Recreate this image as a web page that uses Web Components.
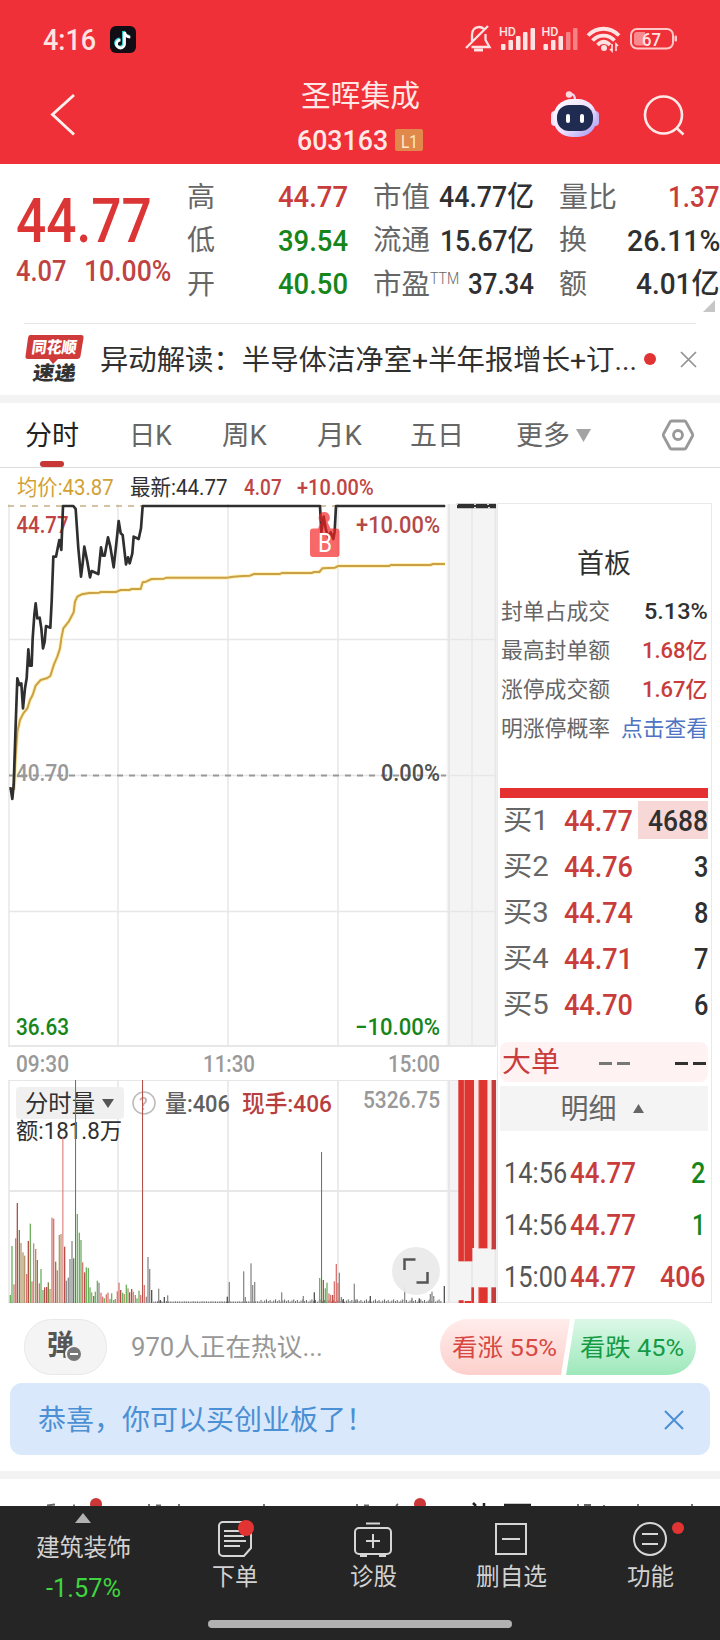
<!DOCTYPE html>
<html lang="zh-CN">
<head>
<meta charset="utf-8">
<title>圣晖集成 603163</title>
<style>
  body {
    margin: 0;
    width: 720px;
    height: 1640px;
    overflow: hidden;
    background: #fff;
    color: #303030;
    font-family: Roboto, "Noto Sans CJK SC", sans-serif;
    --red: #c93c3c;
    --green: #16851a;
    --gray: #666;
    --band: #f3f3f3;
  }
</style>
</head>
<body>
<status-bar></status-bar>
<title-bar name="圣晖集成" code="603163"></title-bar>
<stock-quote></stock-quote>
<news-line>异动解读：半导体洁净室+半年报增长+订...</news-line>
<period-tabs></period-tabs>
<chart-area>
  <minute-chart slot="chart"></minute-chart>
  <volume-chart slot="chart"></volume-chart>
  <order-book slot="side"></order-book>
</chart-area>
<talk-bar></talk-bar>
<tip-banner>恭喜，你可以买创业板了！</tip-banner>
<more-tabs></more-tabs>
<bottom-nav></bottom-nav>

<script>
// Base class: puts styles and markup in an open shadow root
class BaseElement extends HTMLElement {
  constructor() {
    super();
    this.attachShadow({ mode: 'open' });
  }

  connectedCallback() {
    this.shadowRoot.innerHTML = `<style>${this.getStyles()}</style>${this.getMarkup()}`;
  }

  getStyles() { return ''; }
  getMarkup() { return '<slot></slot>'; }
}

// Text squeezed or stretched to a given width
class FitText extends BaseElement {
  connectedCallback() {
    super.connectedCallback();
    const w = Number(this.getAttribute('w'));
    const span = this.shadowRoot.querySelector('span');
    const real = span.offsetWidth;
    if (w && real) {
      this.style.width = w + 'px';
      span.style.transform = `translateY(1px) scaleX(${w / real})`;
    }
  }

  getStyles() {
    return `
      :host { display: block; flex: none; white-space: nowrap; line-height: 1; }
      span { display: inline-block; transform-origin: 0 50%; vertical-align: top; }
    `;
  }

  getMarkup() { return '<span><slot></slot></span>'; }
}
customElements.define('fit-text', FitText);

class StatusBar extends BaseElement {
  getStyles() {
    return `
      :host { display: flex; justify-content: space-between; height: 76px; padding: 0 40px 0 43px;
        background: #f03038; color: #ffe3e3; box-sizing: border-box; }
      .left { display: flex; align-items: center; gap: 14px; height: 78px; }
      fit-text { font-size: 29px; font-weight: 500; }
      svg { display: block; }
      .right { margin-top: 20px; }
      text { font-weight: 500; fill: #ffe3e3; }
    `;
  }

  getMarkup() {
    return `
      <div class="left">
        <fit-text w="53">4:16</fit-text>
        <svg width="26" height="27" viewBox="0 0 26 27">
          <rect width="26" height="27" rx="6" fill="#120c14"/>
          <g fill="none" stroke-width="2.8">
            <path d="M13.5 5v12a4 4 0 1 1-4-4M13.5 5c.6 3 2.500 5 5.800 5.200" stroke="#35d8d8"/>
            <path d="M14.500 6v12a4 4 0 1 1-4-4M14.500 6c.6 3 2.500 5 5.800 5.200" stroke="#fff"/>
          </g>
        </svg>
      </div>
      <svg class="right" width="216" height="36" viewBox="464 20 216 36">
        <g fill="none" stroke="#ffe3e3" stroke-width="2.300">
          <path d="M466 48L488 26M472 41v-6c0-5 3-8 7-8 2 0 4 1 5 2M485.500 34v6l4 7h-18" />
          <path d="M474 50h9" stroke-width="3"/>
        </g>
        <text x="499" y="36" font-size="12.500" textLength="17">HD</text>
        <text x="541.500" y="36" font-size="12.500" textLength="17">HD</text>
        <g fill="#ffe3e3">
          <rect x="501" y="44" width="4.500" height="6" rx="1"/><rect x="508.500" y="40" width="4.500" height="10" rx="1"/>
          <rect x="516" y="36" width="4.500" height="14" rx="1"/><rect x="523" y="32" width="4.500" height="18" rx="1"/>
          <rect x="530.500" y="28" width="4.500" height="22" rx="1"/>
          <rect x="543.500" y="44" width="4.500" height="6" rx="1"/><rect x="551" y="40" width="4.500" height="10" rx="1"/>
          <rect x="558.500" y="36" width="4.500" height="14" rx="1"/>
          <g opacity=".45"><rect x="566" y="32" width="4.500" height="18" rx="1"/><rect x="573" y="28" width="4.500" height="22" rx="1"/></g>
        </g>
        <g fill="none" stroke="#ffe3e3" stroke-width="3.800">
          <path d="M588 35.500c9-9 22-9 31 0M592.500 40.500c6.500-6.500 15.500-6.500 22 0M597.500 45c4-4 8.500-4 12.500 0"/>
        </g>
        <circle cx="604" cy="48" r="3" fill="#ffe3e3"/>
        <path d="M612 44v7l-2-2M616 51v-7l2 2" fill="none" stroke="#ffe3e3" stroke-width="1.600"/>
        <rect x="631" y="29" width="42" height="19.500" rx="6" fill="none" stroke="#ffc9c9" stroke-width="2"/>
        <path d="M637 32h8v13.500h-8a3 3 0 0 1-3-3v-7.500a3 3 0 0 1 3-3z" fill="#f98a8d"/>
        <rect x="674.500" y="35.500" width="2.500" height="6" rx="1" fill="#ffc9c9"/>
        <text x="642" y="45.500" font-size="18.500" textLength="19" lengthAdjust="spacingAndGlyphs">67</text>
      </svg>
    `;
  }
}
customElements.define('status-bar', StatusBar);

class TitleBar extends BaseElement {
  getStyles() {
    return `
      :host { display: grid; grid-template-columns: 290px 140px 290px; height: 88px; background: #f03038; color: #ffe9e7; }
      svg { display: block; }
      .back { margin: 16px 0 0 48px; }
      .mid { display: flex; flex-direction: column; align-items: center; padding-top: 5px; }
      .name { font-size: 29.5px; }
      .code { display: flex; align-items: center; gap: 7px; margin: 16px 0 0; font-size: 27px; font-weight: 500; }
      .tag { display: grid; place-items: center; width: 28px; height: 22px; background: #e1894a;
        border-radius: 2px; font-size: 19px; font-weight: 400; color: #fdebc8; }
      .tools { display: flex; gap: 42px; margin: 13px 0 0 121px; }
    `;
  }

  getMarkup() {
    return `
      <svg class="back" width="30" height="46" viewBox="0 0 30 46"><path d="M26 3L4.500 22.500L26 42.500" fill="none" stroke="#fff0ee" stroke-width="2.900"/></svg>
      <div class="mid">
        <fit-text class="name" w="119">${this.getAttribute('name')}</fit-text>
        <div class="code">
          <fit-text w="91">${this.getAttribute('code')}</fit-text>
          <span class="tag"><fit-text w="17">L1</fit-text></span>
        </div>
      </div>
      <div class="tools">
        <svg width="50" height="50" viewBox="0 0 50 50">
          <defs><linearGradient id="head" x2="1" y2="1"><stop stop-color="#fff"/><stop offset=".55" stop-color="#eedfff"/><stop offset="1" stop-color="#9d92f0"/></linearGradient></defs>
          <path d="M18 5c5-1 6 3 6 6" fill="none" stroke="#e9d4ee" stroke-width="2.200"/>
          <circle cx="18" cy="5.500" r="3.200" fill="#ffd9e0"/>
          <rect x="0" y="22" width="8" height="15" rx="4" fill="#f4dff4"/>
          <rect x="40" y="22" width="8" height="15" rx="4" fill="#c5b2f3"/>
          <rect x="2" y="10" width="44" height="38" rx="19" fill="url(#head)"/>
          <rect x="6" y="16" width="36" height="26" rx="12" fill="#1f2b50"/>
          <rect x="15" y="25" width="4" height="9" rx="2" fill="#fff"/><rect x="29" y="25" width="4" height="9" rx="2" fill="#fff"/>
        </svg>
        <svg width="44" height="50" viewBox="0 0 44 50"><g fill="none" stroke="#ffe9e7" stroke-width="2.600"><circle cx="20.500" cy="26" r="18.500"/><path d="M33.500 39l7 6.500"/></g></svg>
      </div>
    `;
  }
}
customElements.define('title-bar', TitleBar);

class StockQuote extends BaseElement {
  getStyles() {
    return `
      :host { display: grid; grid-template-columns: 187px 161px 25px 161px 25px 1fr; height: 159px;
        box-sizing: border-box; padding-top: 11px; position: relative; }
      .price { padding-left: 16px; color: #dc3535; }
      .price .now { font-size: 61px; font-weight: 500; margin-top: 15px; }
      .price div { display: flex; gap: 17px; margin-top: 5px; font-size: 29px; font-weight: 500; color: #bf4343; }
      .col { display: flex; flex-direction: column; }
      .c2 { grid-column: 4; }
      .c3 { grid-column: 6; }
      .row { display: flex; justify-content: space-between; align-items: center; height: 43.5px; font-size: 29px; font-weight: 500; }
      .label { display: flex; color: var(--gray); font-size: 28px; font-weight: 400; }
      .label .sup { font-size: 16px; font-weight: 300; }
      .up { color: var(--red); }
      .down { color: var(--green); }
      svg { position: absolute; left: 703px; top: 136px; }
      hr { position: absolute; left: 24px; right: 24px; bottom: -1px; margin: 0; border: 0; border-top: 1px solid #e6e6e6; }
    `;
  }

  row(label, w, value, vw, cls = '', sup = '') {
    return `<div class="row"><div class="label"><fit-text w="${w}">${label}</fit-text>${sup}</div><fit-text class="${cls}" w="${vw}">${value}</fit-text></div>`;
  }

  getMarkup() {
    return `
      <div class="price">
        <fit-text class="now" w="136">44.77</fit-text>
        <div><fit-text w="51">4.07</fit-text><fit-text w="87">10.00%</fit-text></div>
      </div>
      <div class="col">
        ${this.row('高', 28, '44.77', 70, 'up')}
        ${this.row('低', 28, '39.54', 70, 'down')}
        ${this.row('开', 28, '40.50', 70, 'down')}
      </div>
      <div class="col c2">
        ${this.row('市值', 57, '44.77亿', 95)}
        ${this.row('流通', 57, '15.67亿', 94)}
        ${this.row('市盈', 57, '37.34', 66, '', '<fit-text class="sup" w="29">TTM</fit-text>')}
      </div>
      <div class="col c3">
        ${this.row('量比', 58, '1.37', 52, 'up')}
        ${this.row('换', 28, '26.11%', 93)}
        ${this.row('额', 28, '4.01亿', 84)}
      </div>
      <svg width="12" height="12"><path d="M12 0v12H0z" fill="#c6c6c6"/></svg>
      <hr>
    `;
  }
}
customElements.define('stock-quote', StockQuote);

class NewsLine extends BaseElement {
  getStyles() {
    return `
      :host { display: flex; align-items: center; height: 72px; border-bottom: 8px solid var(--band); }
      svg { flex: none; display: block; }
      .logo { margin: 0 17px 0 24px; overflow: visible; }
      .logo text { font-weight: 900; font-family: "Noto Sans CJK SC", sans-serif; }
      fit-text { font-size: 28px; padding-top: 1px; }
      .dot { width: 12px; height: 12px; border-radius: 50%; background: #e03434; margin: 0 24px 0 7px; }
    `;
  }

  getMarkup() {
    return `
      <svg class="logo" width="59" height="50" viewBox="0 0 59 50">
        <path d="M6 1h51q3 0 2.500 3l-3 18q-.5 3-3.500 3H34l-5 5-4-5H4q-3 0-2.500-3L4 4q.5-3 2-3z" fill="#cf3a3a"/>
        <text transform="translate(7 19) skewX(-8)" font-size="16" fill="#fff" textLength="45" lengthAdjust="spacingAndGlyphs">同花顺</text>
        <text transform="translate(8 45.500) skewX(-8)" font-size="19.500" fill="#333" textLength="43" lengthAdjust="spacingAndGlyphs">速递</text>
      </svg>
      <fit-text w="537"><slot></slot></fit-text>
      <span class="dot"></span>
      <svg width="17" height="17"><path d="M1 1l15 15M16 1L1 16" stroke="#929292" stroke-width="1.700"/></svg>
    `;
  }
}
customElements.define('news-line', NewsLine);

class PeriodTabs extends BaseElement {
  getStyles() {
    return `
      :host { display: block; }
      nav { display: flex; height: 65px; box-sizing: border-box; padding-left: 25px; border-bottom: 1px solid #ddd; }
      nav > div { display: flex; align-items: center; color: var(--gray); font-size: 27.500px; position: relative; }
      nav .on { color: #222; }
      .on::after { content: ""; position: absolute; left: 15px; bottom: 0; width: 24px; height: 6px; border-radius: 3px; background: #c83636; }
      .more { gap: 6px; }
      svg { align-self: center; }
      .set { margin-left: 70px; }
      .info { display: flex; align-items: center; height: 35px; padding: 2px 0 0 17px; box-sizing: border-box; font-size: 22px; font-weight: 500; }
      .cjk { font-weight: 400; }
    `;
  }

  getMarkup() {
    const tabs = [['分时', 54, 0], ['日K', 43, 50], ['周K', 45, 50], ['月K', 45, 50], ['五日', 54, 48]];
    return `
      <nav>
        ${tabs.map(([t, w, m], i) => `<div class="${i ? '' : 'on'}" style="margin-left:${m}px"><fit-text w="${w}">${t}</fit-text></div>`).join('')}
        <div class="more" style="margin-left:52px"><fit-text w="54">更多</fit-text><svg width="15" height="13"><path d="M0 0h15L7.500 13z" fill="#a3a3a3"/></svg></div>
        <svg class="set" width="34" height="34" viewBox="0 0 34 34"><g fill="none" stroke="#999" stroke-width="2.800"><path d="M10.500 3h13q1 0 1.500 1l6.500 12q.5 1 0 2L25 30q-.5 1-1.500 1h-13q-1 0-1.500-1L2.500 18q-.5-1 0-2L9 4q.5-1 1.500-1z"/><circle cx="17" cy="17" r="4.500"/></g></svg>
      </nav>
      <div class="info">
        <fit-text w="97" class="cjk" style="color:#d2a136">均价:43.87</fit-text>
        <fit-text w="98" style="margin-left:16px" class="cjk">最新:44.77</fit-text>
        <fit-text w="38" style="margin-left:16px;color:#c04444">4.07</fit-text>
        <fit-text w="77" style="margin-left:15px;color:#c04444">+10.00%</fit-text>
      </div>
    `;
  }
}
customElements.define('period-tabs', PeriodTabs);

class ChartArea extends BaseElement {
  getStyles() {
    return `
      :host { display: grid; grid-template-columns: 489px 215px; padding-left: 8px; height: 800px; }
      .left { display: flex; flex-direction: column; }
    `;
  }

  getMarkup() {
    return '<div class="left"><slot name="chart"></slot></div><slot name="side"></slot>';
  }
}
customElements.define('chart-area', ChartArea);

// Price line of the day, one unit in the line group = 1/3 px
const PRICE = '28,880 32,880 37,912 41,870 44,780 47,690 52,550 58,570 64,565 69,640 75,580 80,550 85,463 89,512 95,512 98,430 103,360 107,325 112,370 119,368 124,400 129,460 134,440 138,393 151,398 155,320 160,185 168,185 173,160 178,135 184,165 189,33 220,33 227,42 235,160 243,245 248,205 253,155 262,200 270,247 275,228 295,237 303,157 308,182 314,182 324,127 331,155 341,217 349,145 356,78 362,115 368,120 378,208 384,187 389,205 397,175 401,125 416,132 423,100 428,33 960,33 964,112 971,65 978,105 984,125 992,112 1000,132 1004,110 1008,33 1335,33';
const AVERAGE = '42,885 46,800 52,710 60,675 70,655 82,640 90,615 98,600 107,572 122,555 140,550 151,543 162,508 172,485 180,460 184,430 190,400 206,380 221,352 225,320 232,305 245,298 268,294 298,293 302,291 348,291 362,285 388,285 395,282 422,282 428,262 438,260 455,252 492,251 500,248 680,248 700,245 730,243 750,242 762,237 840,237 845,234 935,234 942,231 958,231 967,220 1005,218 1015,213 1168,213 1172,210 1292,210 1298,207 1335,207';

class MinuteChart extends BaseElement {
  getStyles() {
    return `
      :host { display: block; height: 577px; }
      svg { display: block; }
      text { font-size: 24px; font-weight: 500; }
    `;
  }

  label(x, y, w, text, fill) {
    return `<text x="${x}" y="${y}" fill="${fill}" textLength="${w}" lengthAdjust="spacingAndGlyphs">${text}</text>`;
  }

  getMarkup() {
    return `
      <svg width="489" height="577" viewBox="8 503 489 577">
        <rect x="446.500" y="504" width="50" height="542" fill="#f4f4f4"/>
        <g stroke="#e7e7e7" stroke-width="1.500" fill="none">
          <path d="M9 504v542M118 504v542M228 504v542M338 504v542M472 504v542"/>
          <path d="M9 639.500h487M9 775.500h487M9 911.500h487"/>
          <path d="M8 1046h488" stroke-width="2"/>
          <path d="M449 504v542M495.500 504v542" stroke-width="2"/>
        </g>
        <path d="M8 506h438" stroke="#c8ae86" stroke-width="1.600" stroke-dasharray="6 6"/>
        <path d="M9 775.500h437" stroke="#999" stroke-width="1.800" stroke-dasharray="6 6"/>
        ${this.label(16.500, 533, 52, '44.77', '#c04343')}
        ${this.label(356, 533, 84, '+10.00%', '#b54848')}
        ${this.label(16, 781, 53, '40.70', '#999')}
        ${this.label(381, 781, 59, '0.00%', '#505050')}
        ${this.label(16, 1035, 53, '36.63', '#16851a')}
        ${this.label(355, 1035, 85, '−10.00%', '#16851a')}
        ${this.label(16, 1072, 53, '09:30', '#999')}
        ${this.label(203, 1072, 52, '11:30', '#999')}
        ${this.label(388, 1072, 52, '15:00', '#999')}
        <g transform="translate(0 495) scale(.33333)" fill="none" stroke-linejoin="round">
          <polyline points="${AVERAGE}" stroke="#fff2b8" stroke-width="12"/>
          <polyline points="${AVERAGE}" stroke="#caa049" stroke-width="6"/>
          <polyline points="${PRICE}" stroke="#2f2f2f" stroke-width="8"/>
        </g>
        <path d="M457 506h39" stroke="#303030" stroke-width="4.500" stroke-linecap="butt"/>
        <path d="M457 503.500v1.500M475 503.500v1.500M475 507v1.500M488 503.500v1.500M489 507v1.500" stroke="#ddd" stroke-width="2"/>
        <g fill="#f52020" fill-opacity=".68">
          <path d="M324.500 512a5.500 5.500 0 0 1 3 10l3 6.500h6.500a3 3 0 0 1 2.500 3v22.500a3 3 0 0 1-3 3h-23.500a3 3 0 0 1-3-3v-22.500a3 3 0 0 1 3-3h5l3-6.500a5.500 5.500 0 0 1 3-10z"/>
        </g>
        <text x="318" y="552" fill="#fff" style="font-weight:400;font-size:25px" textLength="14" lengthAdjust="spacingAndGlyphs">B</text>
      </svg>
    `;
  }
}
customElements.define('minute-chart', MinuteChart);

// Volume bars: x, top, colour key
const BARS = [
  [31,765,'g'],[36,618,'g'],[42,733,'r'],[47,595,'r'],[52,489,'R'],[58,570,'o'],[63,609,'t'],[69,637,'t'],[74,647,'t'],[80,702,'r'],
  [85,603,'R'],[91,551,'g'],[96,724,'r'],[101,610,'t'],[107,627,'r'],[112,660,'o'],[118,730,'r'],[123,687,'g'],[129,750,'g'],[134,742,'R'],
  [140,741,'R'],[145,727,'o'],[150,747,'t'],[156,533,'r'],[161,536,'r'],[167,665,'o'],[172,691,'r'],[178,585,'t'],[183,582,'t'],[189,290,'r'],
  [194,620,'R'],[199,722,'k'],[205,713,'k'],[210,657,'k'],[216,603,'k'],[221,655,'G'],[227,117,'G'],[232,522,'g'],[238,578,'g'],[243,600,'g'],
  [248,667,'r'],[254,697,'R'],[259,682,'g'],[265,684,'g'],[270,742,'g'],[275,757,'t'],[281,768,'G'],[286,755,'g'],[292,722,'g'],[297,728,'k'],
  [303,758,'r'],[308,770,'r'],[313,775,'g'],[319,763,'r'],[324,758,'r'],[330,777,'g'],[335,760,'g'],[341,780,'r'],[346,777,'g'],[352,754,'r'],
  [357,728,'r'],[362,750,'R'],[368,758,'g'],[373,762,'t'],[379,734,'g'],[384,745,'t'],[389,757,'R'],[395,747,'R'],[400,755,'t'],[406,765,'r'],
  [411,775,'g'],[417,752,'g'],[422,765,'r'],[428,117,'R'],[433,735,'r'],[439,770,'k'],[444,651,'k'],[449,687,'k'],[455,750,'d'],
  [476,746,'k'],[481,780,'d'],[493,771,'d'],[503,766,'k'],[682,770,'d'],[688,726,'k'],[731,694,'k'],[736,771,'k'],[753,670,'k'],[758,735,'k'],
  [764,726,'k'],[845,757,'k'],[910,768,'k'],[943,757,'d'],[959,714,'g'],[965,336,'G'],[970,720,'R'],[976,745,'g'],[981,728,'g'],[987,760,'r'],
  [992,765,'r'],[998,765,'R'],[1003,724,'r'],[1009,672,'r'],[1014,729,'r'],[1018,698,'k'],[1024,771,'k'],[1030,777,'d'],[1063,731,'k'],[1068,778,'k'],
  [1111,768,'d'],[1214,740,'k'],[1236,773,'k'],[1258,775,'d'],[1291,762,'k'],[1296,755,'k'],[1301,768,'k'],[1333,738,'d']
];
const BAR_COLORS = { r: '#d97872', R: '#b54f49', g: '#6db161', G: '#4a8f45', o: '#7f8446', t: '#b59a6e', k: '#8d8d8d', d: '#555' };

class VolumeChart extends BaseElement {
  getStyles() {
    return `
      :host { display: block; height: 223px; }
      svg { display: block; }
      text { font-size: 24px; }
    `;
  }

  bars() {
    let out = '';
    // low ticks along the base line
    for (let i = 0, x = 460; x < 1325; x += 5.450, i++) {
      const top = 785 - (i * 7 % 5) * (x > 780 ? 1.700 : .300);
      out += `<rect x="${x.toFixed(1)}" y="${top.toFixed(1)}" width="3" height="${(789 - top).toFixed(1)}" fill="#666"/>`;
    }
    for (const [x, top, c] of BARS) {
      out += `<rect x="${x - 2}" y="${top}" width="${top < 350 ? 3.200 : 4}" height="${789 - top}" fill="${BAR_COLORS[c]}"/>`;
    }
    return out;
  }

  getMarkup() {
    return `
      <svg width="489" height="223" viewBox="8 1080 489 223">
        <rect x="446.500" y="1080" width="50" height="223" fill="#f4f4f4"/>
        <g stroke="#e7e7e7" stroke-width="1.600" fill="none">
          <path d="M9 1080v223M118 1080v223M228 1080v223M338 1080v223M472 1080v223"/>
          <path d="M9 1191h487M8 1080h488" stroke-width="2"/>
          <path d="M449 1080v223M495.500 1080v223" stroke-width="2"/>
          <path d="M9 1302.500h487"/>
        </g>
        <rect x="16" y="1087" width="108" height="32" rx="4" fill="#f0f0f0"/>
        <text x="25" y="1111.500" fill="#303030" textLength="70" lengthAdjust="spacingAndGlyphs">分时量</text>
        <path d="M102 1099h12l-6 9z" fill="#555"/>
        <g fill="none" stroke="#bdbdbd" stroke-width="1.600"><circle cx="144" cy="1103" r="11"/></g>
        <text x="139" y="1109.500" style="font-size:18px" fill="#c2a8a8">?</text>
        <text x="165" y="1112" fill="#606060" font-weight="500" textLength="65" lengthAdjust="spacingAndGlyphs">量:406</text>
        <text x="242" y="1112" fill="#b83e3e" font-weight="500" textLength="90" lengthAdjust="spacingAndGlyphs">现手:406</text>
        <text x="363" y="1108" fill="#999" font-weight="500" textLength="77" lengthAdjust="spacingAndGlyphs">5326.75</text>
        <text x="16" y="1138.500" fill="#303030" style="font-size:23px" textLength="106" lengthAdjust="spacingAndGlyphs">额:181.8万</text>
        <g transform="translate(0 1040) scale(.33333)">
          ${this.bars()}
          <g fill="#df3531">
            <rect x="1375" y="117" width="42" height="547"/><rect x="1415" y="117" width="7" height="507"/>
            <rect x="1435" y="117" width="28" height="508"/><rect x="1474" y="117" width="14" height="511" fill="#c63d3d"/>
            <rect x="1414" y="742" width="8" height="47"/><rect x="1435" y="742" width="28" height="47"/><rect x="1474" y="742" width="14" height="47" fill="#c63d3d"/>
            <path d="M1376 781h15v8h-15zM1394 783h20v6h-20z"/>
          </g>
          <path d="M1422 117h13v507h-13zM1463 117h11v508h-11z" fill="#fbe6e4"/>
          <path d="M1393 117v547M1436 117v508M1436 742v46" stroke="#f19b98" stroke-width="2.500"/>
        </g>
        <circle cx="416" cy="1271" r="24" fill="#e9e9e9" fill-opacity=".93"/>
        <path d="M404.500 1270v-10.500h11M427.500 1272v10.500h-11" fill="none" stroke="#555" stroke-width="2.500"/>
      </svg>
    `;
  }
}
customElements.define('volume-chart', VolumeChart);

class OrderBook extends BaseElement {
  getStyles() {
    return `
      :host { display: block; box-sizing: border-box; height: 800px; padding: 0 3px 0 2px; border: 1px solid #e9e9e9; font-weight: 500; }
      .title { display: flex; justify-content: center; padding: 46px 0 15px; font-size: 27px; font-weight: 400; }
      .stat, .bid, .deal { display: grid; align-items: center; }
      .stat { grid-template-columns: 1fr auto; height: 38.800px; font-size: 22px; padding: 0 0 0 1px; }
      .stat :first-child { color: var(--gray); font-weight: 400; }
      .up { color: var(--red); }
      .down { color: var(--green); }
      .link { color: #4f74c4; font-weight: 400; }
      .bar { height: 10px; background: #e43030; margin: 41px 0 -1px; }
      .bid { grid-template-columns: 61px 74px 1fr; height: 46px; font-size: 29px; padding-left: 3px; }
      .bid .n { color: var(--gray); font-weight: 400; font-size: 28px; }
      .bid div, .big div, .deal div { display: flex; justify-content: flex-end; align-items: center; height: 38px; padding-right: 0; }
      .bid .hot { background: #f8d7d7; }
      .big { display: grid; grid-template-columns: 62px 68px 1fr; align-items: center; height: 40px; margin-top: 15px; padding-left: 2px;
        background: #fff2f2; border-radius: 8px; font-size: 28px; }
      .big div { padding: 2px 2px 0 0; }
      .dash { width: 31px; height: 3px; background: linear-gradient(90deg, currentColor 13px, transparent 13px, transparent 18px, currentColor 18px); }
      .detail { display: flex; justify-content: center; align-items: center; gap: 16px; height: 45px; margin: 4px 0 15px;
        padding-right: 4px; box-sizing: border-box; background: #f4f4f4; color: var(--gray); font-weight: 400; font-size: 28px; }
      .deal { grid-template-columns: 66px 66px 1fr; height: 52px; font-size: 29px; padding-left: 4px; }
      .deal .t { color: #555; font-weight: 400; }
      .deal div { padding-right: 3px; }
    `;
  }

  getMarkup() {
    const stats = [['封单占成交', '5.13%', 64, ''], ['最高封单额', '1.68亿', 66, 'up'], ['涨停成交额', '1.67亿', 66, 'up'], ['明涨停概率', '点击查看', 87, 'link']];
    const bids = [['1', '44.77', '4688', 60], ['2', '44.76', '3', 14], ['3', '44.74', '8', 14], ['4', '44.71', '7', 14], ['5', '44.70', '6', 14]];
    const deals = [['14:56', '2', 14, 'down'], ['14:56', '1', 13, 'down'], ['15:00', '406', 45, 'up']];
    return `
      <div class="title"><fit-text w="54">首板</fit-text></div>
      ${stats.map(([k, v, w, c]) => `<div class="stat"><fit-text w="109">${k}</fit-text><fit-text w="${w}" class="${c}">${v}</fit-text></div>`).join('')}
      <div class="bar"></div>
      ${bids.map(([n, p, q, w], i) => `<div class="bid"><fit-text class="n" w="46">买${n}</fit-text><fit-text class="up" w="69">${p}</fit-text><div class="${i ? '' : 'hot'}"><fit-text w="${w}">${q}</fit-text></div></div>`).join('')}
      <div class="big"><fit-text class="up" style="font-weight:400" w="58">大单</fit-text><div><span class="dash" style="color:#777"></span></div><div><span class="dash"></span></div></div>
      <div class="detail"><fit-text w="56">明细</fit-text><svg width="11" height="9"><path d="M5.500 0L11 9H0z" fill="#666"/></svg></div>
      ${deals.map(([t, q, w, c]) => `<div class="deal"><fit-text class="t" w="63">${t}</fit-text><fit-text class="up" w="66">44.77</fit-text><div><fit-text class="${c}" w="${w}">${q}</fit-text></div></div>`).join('')}
    `;
  }
}
customElements.define('order-book', OrderBook);

class TalkBar extends BaseElement {
  getStyles() {
    return `
      :host { display: flex; align-items: center; height: 80px; padding: 8px 24px 0; box-sizing: border-box; }
      .pill { width: 83px; height: 56px; flex: none; }
      .say { margin: 0 117px 0 24px; font-size: 25.500px; color: #979797; }
      svg { display: block; flex: none; }
      text { font-size: 23.500px; }
    `;
  }

  getMarkup() {
    return `
      <svg class="pill" viewBox="24 1319 83 56">
        <rect x="24.500" y="1319.500" width="82" height="55" rx="27" fill="#f4f4f4" stroke="#e8e8e8"/>
        <text x="47" y="1355" style="font-size:28px;font-weight:700" fill="#555" textLength="27" lengthAdjust="spacingAndGlyphs">弹</text>
        <circle cx="74" cy="1354" r="8" fill="#777" stroke="#f4f4f4" stroke-width="2"/>
        <path d="M70 1354h8" stroke="#fff" stroke-width="2"/>
      </svg>
      <fit-text class="say" w="192">970人正在热议...</fit-text>
      <svg width="256" height="56" viewBox="0 0 256 56">
        <defs>
          <linearGradient id="up" x2="0" y2="1"><stop stop-color="#ffeceb"/><stop offset="1" stop-color="#fcd0cc"/></linearGradient>
          <linearGradient id="down" x2="0" y2="1"><stop stop-color="#dcf8e8"/><stop offset="1" stop-color="#9de8ba"/></linearGradient>
        </defs>
        <path d="M28 0h102l-9 56H28a28 28 0 0 1 0-56z" fill="url(#up)"/>
        <path d="M135 0h93a28 28 0 0 1 0 56H126z" fill="url(#down)"/>
        <text x="12" y="37" fill="#d84843" textLength="105" lengthAdjust="spacingAndGlyphs">看涨 55%</text>
        <text x="140" y="37" fill="#159a45" textLength="104" lengthAdjust="spacingAndGlyphs">看跌 45%</text>
      </svg>
    `;
  }
}
customElements.define('talk-bar', TalkBar);

class TipBanner extends BaseElement {
  getStyles() {
    return `
      :host { display: flex; justify-content: space-between; align-items: center; height: 72px; margin: 0 10px 16px; padding: 1px 26px 0 28px;
        box-sizing: border-box; border-radius: 12px; background: #d9e8fb; color: #4b8fd4; font-size: 28px; }
    `;
  }

  getMarkup() {
    return `
      <fit-text w="336"><slot></slot></fit-text>
      <svg width="20" height="20"><path d="M1 1l18 18M19 1L1 19" stroke="#4b8fd4" stroke-width="2"/></svg>
    `;
  }
}
customElements.define('tip-banner', TipBanner);

// Section tabs, only their upper edge shows above the bottom bar
class MoreTabs extends BaseElement {
  getStyles() {
    return ':host { display: block; height: 27px; border-top: 8px solid var(--band); } svg { display: block; }';
  }

  getMarkup() {
    return `
      <svg width="720" height="27">
        <path d="M47 26.500l8-1M74 25.500v2M149 25v2M156 26.500h5M179 25v2M264 25v2M357 25v2M364 26.500h5M398 25l-2 2M578 25v2M584 26h7M604 26v1M638 25v2M692 25v2" stroke="#666" stroke-width="1.800" fill="none"/>
        <path d="M473 24l3 3M484 24v3M504 26h27" stroke="#222" stroke-width="2.500" fill="none"/>
        <circle cx="96" cy="25" r="6" fill="#cc3636"/><circle cx="420" cy="25" r="6" fill="#cc3636"/>
      </svg>
    `;
  }
}
customElements.define('more-tabs', MoreTabs);

class BottomNav extends BaseElement {
  getStyles() {
    return `
      :host { display: flex; flex-direction: column; height: 134px; background: #252525; color: #d2d2d2; position: relative; }
      .items { display: grid; grid-template-columns: 166px 138px 138px 138px 140px; height: 114px; }
      .items > div { display: flex; flex-direction: column; align-items: center; font-size: 24px; }
      svg { display: block; margin: 12px 0 6px; overflow: visible; }
      .sector svg { margin: 7px 0 12px; }
      .sector .pct { margin-top: 16px; color: #3fd53f; font-size: 25px; }
      .home { width: 304px; height: 8px; border-radius: 4px; background: #b1b1b1; margin-left: 208px; }
    `;
  }

  getMarkup() {
    const icon = (inner) => `<svg width="44" height="40" viewBox="0 0 44 40" fill="none" stroke="#d6d6d6" stroke-width="2">${inner}</svg>`;
    return `
      <div class="items">
        <div class="sector">
          <svg width="16" height="10"><path d="M8 0l8 10H0z" fill="#b2b2b2"/></svg>
          <fit-text w="95">建筑装饰</fit-text>
          <fit-text class="pct" w="75">-1.57%</fit-text>
        </div>
        <div>${icon('<path d="M10 4h24a4 4 0 0 1 4 4v22l-7 8H10a4 4 0 0 1-4-4V8a4 4 0 0 1 4-4zM11 13h17M11 18h20M11 23h22M11 28h16"/><circle cx="33" cy="10" r="8" fill="#e33434" stroke="none"/>')}<fit-text w="46">下单</fit-text></div>
        <div>${icon('<rect x="4" y="10" width="36" height="26" rx="4"/><path d="M15 5.500h14M22 16v14M15 23h14M9 38h7M28 38h7"/>')}<fit-text w="47">诊股</fit-text></div>
        <div>${icon('<rect x="7" y="6" width="30" height="30"/><path d="M13 21h18"/>')}<fit-text w="71">删自选</fit-text></div>
        <div>${icon('<circle cx="22" cy="21" r="16"/><path d="M14 16h16M14 26h16"/><circle cx="50" cy="10" r="6" fill="#e33434" stroke="none"/>')}<fit-text w="47">功能</fit-text></div>
      </div>
      <div class="home"></div>
    `;
  }
}
customElements.define('bottom-nav', BottomNav);
</script>
</body>
</html>
